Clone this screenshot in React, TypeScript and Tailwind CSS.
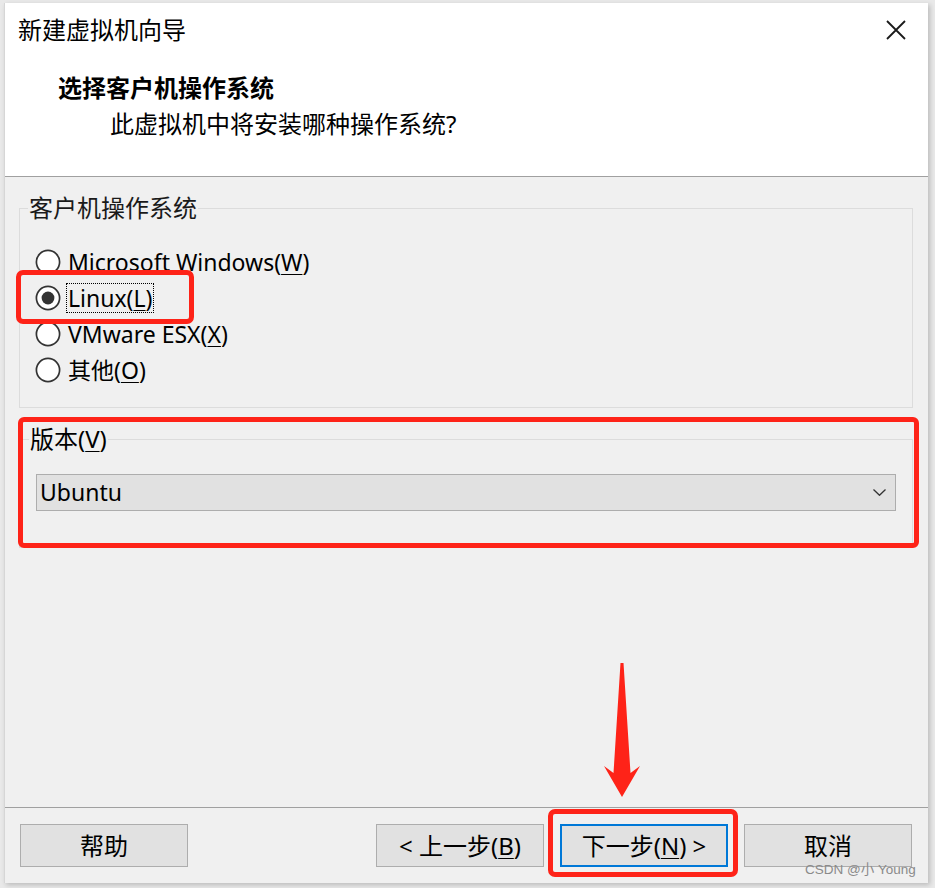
import React from "react";

const font = {fontFamily: '"Noto Sans", "Noto Sans CJK SC", sans-serif'};

function U({children}: {children: React.ReactNode}) {
    return <span className="underline decoration-1 underline-offset-[3px]">{children}</span>;
}

function Radio({checked, focused, children}: {checked?: boolean; focused?: boolean; children: React.ReactNode}) {
    return (
        <div className="flex h-[36px] items-center">
            <svg width="26" height="26" viewBox="0 0 26 26" className="shrink-0">
                <circle cx="13" cy="13" r="11.6" fill="#ffffff" stroke="#333333" strokeWidth="1.7"/>
                {checked && <circle cx="13" cy="13" r="6.4" fill="#333333"/>}
            </svg>
            <span
                className={
                    "ml-[5px] border px-[1px] text-[23px] leading-[28px] text-black " +
                    (focused ? "border-dotted border-black" : "border-transparent")
                }
            >
                {children}
            </span>
        </div>
    );
}

function Button({children, primary}: {children: React.ReactNode; primary?: boolean}) {
    return (
        <button
            className={
                "flex h-[43px] w-[168px] items-center justify-center bg-[#e1e1e1] text-[24px] text-black " +
                (primary ? "border-2 border-[#0078d7]" : "border border-[#adadad]")
            }
        >
            {children}
        </button>
    );
}

export default function App() {
    return (
        <div className="relative h-[888px] w-[935px] overflow-hidden bg-[#e9e9e9] pl-[4px] pt-[3px]" style={font}>
            <div className="flex h-[880px] w-[924px] flex-col border-l border-[#d6d6d6] bg-[#f0f0f0] shadow-[2px_2px_5px_rgba(0,0,0,0.2)]">
                {/* header */}
                <div className="flex h-[174px] shrink-0 flex-col border-b border-[#a0a0a0] bg-white">
                    <div className="mt-[12px] flex h-[30px] items-center justify-between pl-[13px] pr-[22px]">
                        <span className="text-[24px] leading-[30px] text-black">新建虚拟机向导</span>
                        <svg width="20" height="20" viewBox="0 0 20 20">
                            <path d="M1 1 L19 19 M19 1 L1 19" stroke="#1a1a1a" strokeWidth="1.8" fill="none"/>
                        </svg>
                    </div>
                    <div className="mt-[28px] pl-[53px] text-[24px] font-bold leading-[30px] text-black">选择客户机操作系统</div>
                    <div className="mt-[6px] pl-[105px] text-[24px] leading-[30px] text-black">此虚拟机中将安装哪种操作系统?</div>
                </div>

                {/* body */}
                <div className="flex flex-1 flex-col pl-[14px] pr-[15px]">
                    <fieldset className="mt-[16px] border border-[#dcdcdc] pb-[19px] pl-[15px]">
                        <legend className="ml-[-7px] px-[1px] text-[24px] leading-[30px] text-[#1a1a1a]">客户机操作系统</legend>
                        <div className="flex flex-col pt-[21px]">
                            <Radio>Microsoft Windows(<U>W</U>)</Radio>
                            <Radio checked focused>Linux(<U>L</U>)</Radio>
                            <Radio>VMware ESX(<U>X</U>)</Radio>
                            <Radio>其他(<U>O</U>)</Radio>
                        </div>
                    </fieldset>

                    <fieldset className="mt-[16px] border border-[#dcdcdc] px-[16px] pb-[36px]">
                        <legend className="ml-[-7px] px-[1px] text-[24px] leading-[30px] text-black">版本(<U>V</U>)</legend>
                        <div className="mt-[20px] flex h-[37px] items-center justify-between border border-[#adadad] bg-[#e1e1e1] pl-[3px] pr-[9px]">
                            <span className="text-[23px] text-black">Ubuntu</span>
                            <svg width="13" height="7" viewBox="0 0 13 7">
                                <path d="M0.5 0.5 L6.5 6.3 L12.5 0.5" stroke="#333333" strokeWidth="1.3" fill="none"/>
                            </svg>
                        </div>
                    </fieldset>
                </div>

                {/* footer */}
                <div className="flex h-[76px] shrink-0 items-start justify-between border-t border-[#a0a0a0] pl-[15px] pr-[16px] pt-[16px]">
                    <Button>帮助</Button>
                    <div className="flex gap-[16px]">
                        <Button>&lt; 上一步(<U>B</U>)</Button>
                        <Button primary>下一步(<U>N</U>) &gt;</Button>
                        <Button>取消</Button>
                    </div>
                </div>
            </div>

            {/* annotations */}
            <div className="absolute left-[16px] top-[270px] h-[54px] w-[178px] rounded-[7px] border-[5px] border-[#fe2318]"/>
            <div className="absolute left-[18px] top-[417px] h-[131px] w-[901px] rounded-[6px] border-[5px] border-[#fe2318]"/>
            <div className="absolute left-[548px] top-[809px] h-[68px] w-[190px] rounded-[7px] border-[5px] border-[#fe2318]"/>
            <svg className="absolute left-0 top-0" width="935" height="888">
                <polygon points="620.5,663 623.5,663 630.5,773 640,766 622,797 604,766 613.5,773" fill="#fe2318"/>
            </svg>
            <div
                className="absolute left-[805px] top-[860px] text-[13.5px] leading-[20px] text-[#8a8a8a]"
                style={{fontFamily: '"Liberation Sans", "Noto Sans CJK SC", sans-serif'}}
            >
                CSDN @小 Young
            </div>
        </div>
    );
}
